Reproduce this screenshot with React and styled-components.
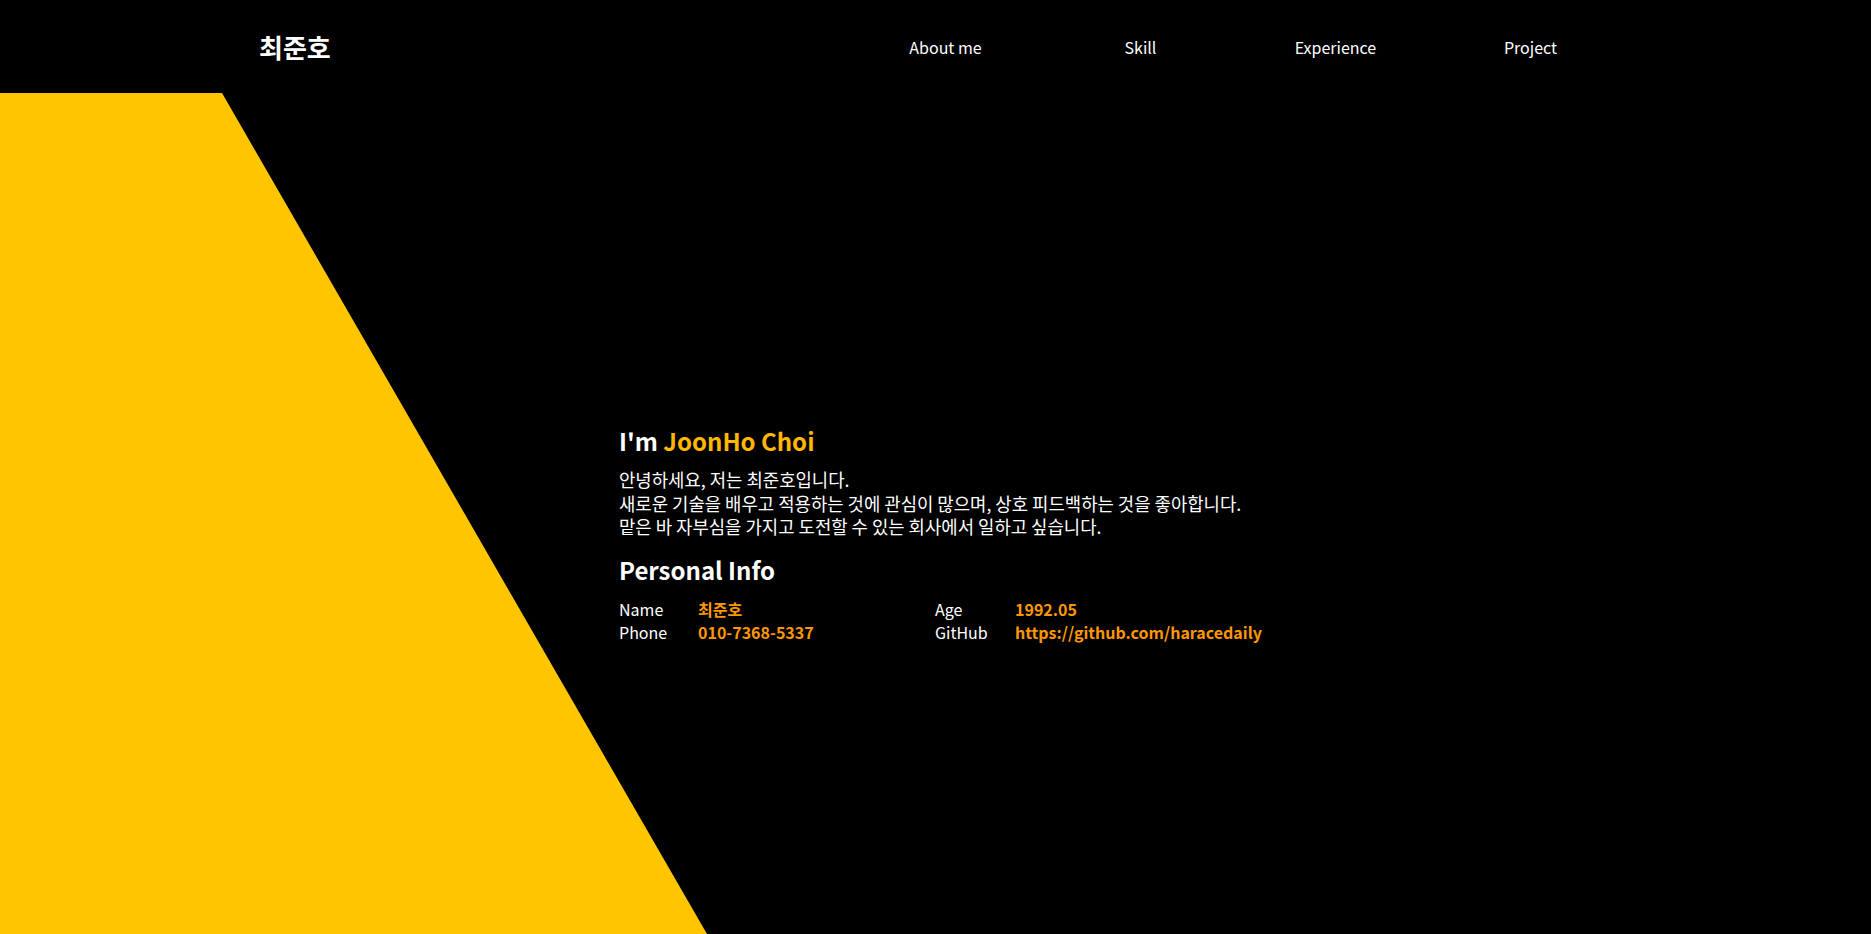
import React from "react";
import styled, { createGlobalStyle } from "styled-components";

const Global = createGlobalStyle`
  html, body { margin: 0; padding: 0; background: #000; }
  body { font-family: "Noto Sans CJK KR", "Noto Sans", sans-serif; color: #fff; }
  * { box-sizing: border-box; }
`;

const Page = styled.div`
  background: #000;
  min-height: 100vh;
  display: flex;
  flex-direction: column;
`;

const Header = styled.header`
  height: 93px;
  display: flex;
  align-items: center;
  padding-left: 259px;
  padding-right: 243px;
`;

const Logo = styled.div`
  font-size: 26px;
  font-weight: 700;
  line-height: 1;
`;

const Nav = styled.nav`
  margin-left: auto;
  display: flex;
`;

const NavItem = styled.a`
  width: 195px;
  text-align: center;
  font-size: 16px;
  line-height: 1;
  color: #fff;
  text-decoration: none;
`;

const Hero = styled.section`
  position: relative;
  flex: 1;
  display: flex;
  align-items: center;
  padding-left: 619px;
  padding-top: 42px;
  overflow: hidden;

  &::before {
    content: "";
    position: absolute;
    inset: 0;
    background: #ffc600;
    clip-path: polygon(0 0, 222px 0, 707px 100%, 0 100%);
  }
`;

const Content = styled.div`
  position: relative;
  display: flex;
  flex-direction: column;
`;

const Title = styled.h2`
  margin: 0;
  font-size: 24px;
  font-weight: 700;
  line-height: 32px;
`;

const Accent = styled.span`
  color: #ffb700;
`;

const Intro = styled.p`
  margin: 11px 0 0;
  font-size: 17.8px;
  line-height: 23.5px;
`;

const SubTitle = styled(Title)`
  margin-top: 15px;
`;

const InfoGrid = styled.div`
  margin-top: 12px;
  display: grid;
  grid-template-columns: 79px 237px 80px auto;
  font-size: 16px;
  line-height: 23px;
`;

const Label = styled.span`
  color: #fff;
`;

const Value = styled.span`
  color: #ff9800;
  font-weight: 700;
`;

export default function App() {
  return (
    <>
      <Global />
      <Page>
        <Header>
          <Logo>최준호</Logo>
          <Nav>
            <NavItem href="#about">About me</NavItem>
            <NavItem href="#skill">Skill</NavItem>
            <NavItem href="#experience">Experience</NavItem>
            <NavItem href="#project">Project</NavItem>
          </Nav>
        </Header>
        <Hero>
          <Content>
            <Title>
              I'm <Accent>JoonHo Choi</Accent>
            </Title>
            <Intro>
              안녕하세요, 저는 최준호입니다.
              <br />
              새로운 기술을 배우고 적용하는 것에 관심이 많으며, 상호 피드백하는 것을 좋아합니다.
              <br />
              맡은 바 자부심을 가지고 도전할 수 있는 회사에서 일하고 싶습니다.
            </Intro>
            <SubTitle>Personal Info</SubTitle>
            <InfoGrid>
              <Label>Name</Label>
              <Value>최준호</Value>
              <Label>Age</Label>
              <Value>1992.05</Value>
              <Label>Phone</Label>
              <Value>010-7368-5337</Value>
              <Label>GitHub</Label>
              <Value>https://github.com/haracedaily</Value>
            </InfoGrid>
          </Content>
        </Hero>
      </Page>
    </>
  );
}
